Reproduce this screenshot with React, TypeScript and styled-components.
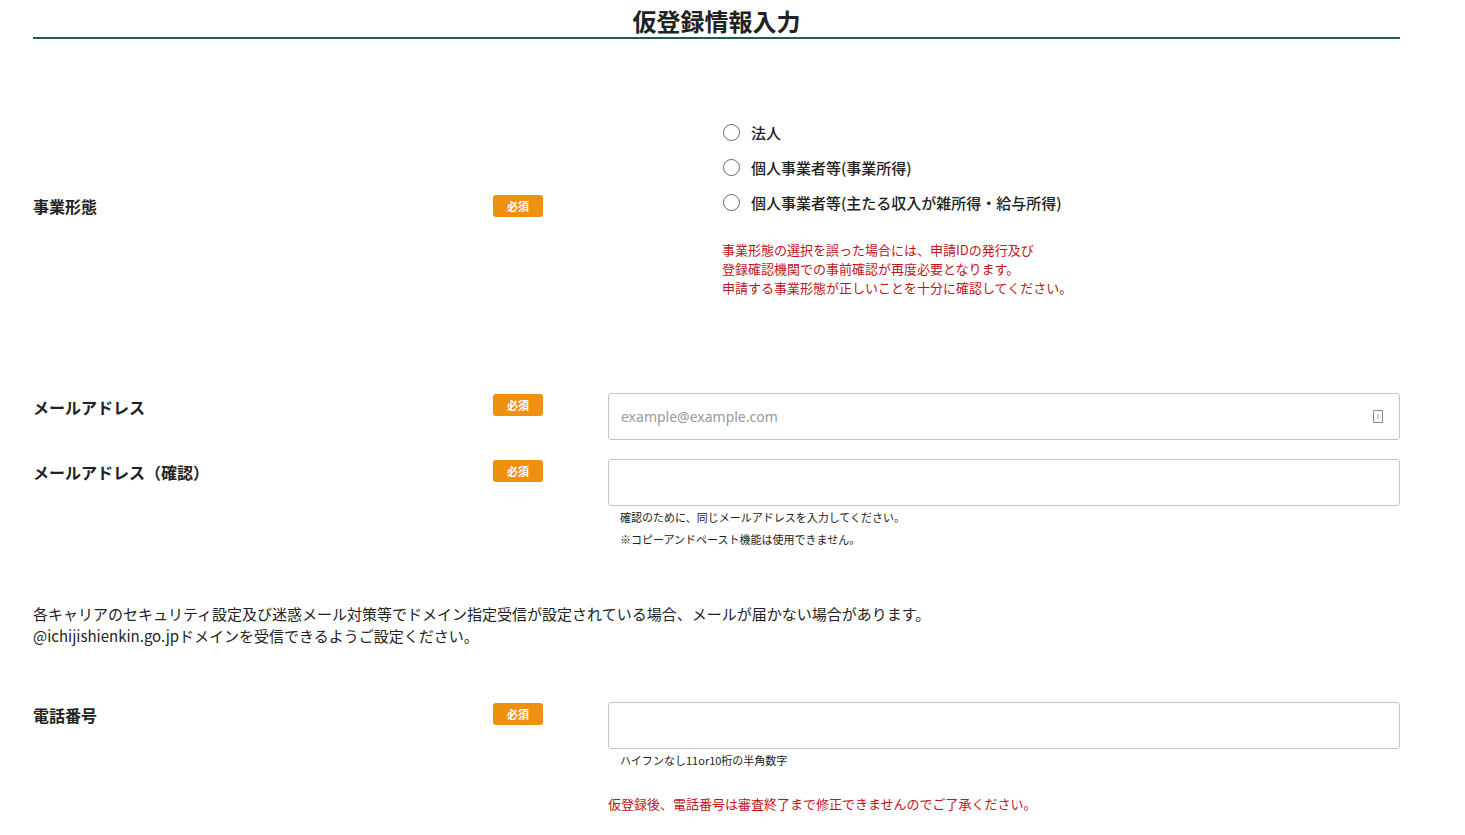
import React from 'react';
import styled, { createGlobalStyle } from 'styled-components';

const Global = createGlobalStyle`
  body { margin: 0; background: #fff; font-family: "Noto Sans CJK JP", "Noto Sans", sans-serif; color: #222; }
`;

const Page = styled.div`
  width: 1367px;
  margin-left: 33px;
`;

const Title = styled.h1`
  margin: 0;
  padding-top: 4px;
  height: 33px;
  font-size: 24px;
  font-weight: 700;
  text-align: center;
  line-height: 33px;
  border-bottom: 2px solid #1f5e4a;
`;

const Row = styled.div<{ $top: number; $align?: string; $pb?: number }>`
  display: grid;
  grid-template-columns: 460px 115px 1fr;
  align-items: ${(p) => p.$align || 'start'};
  margin-top: ${(p) => p.$top}px;
  padding-bottom: ${(p) => p.$pb ?? 0}px;
`;

const Label = styled.div<{ $pt?: number }>`
  font-size: 16px;
  font-weight: 700;
  padding-top: ${(p) => p.$pt ?? 0}px;
`;

const Badge = styled.span<{ $mt?: number }>`
  display: inline-block;
  width: 50px;
  height: 22px;
  margin-top: ${(p) => p.$mt ?? 0}px;
  background: #f0900f;
  color: #fff;
  border-radius: 3px;
  font-size: 11px;
  font-weight: 700;
  text-align: center;
  line-height: 22px;
  justify-self: start;
`;

const Radios = styled.div`
  padding-left: 114px;
`;

const RadioItem = styled.label`
  display: flex;
  align-items: center;
  gap: 11px;
  height: 35px;
  font-size: 15px;
  font-weight: 500;
`;

const Circle = styled.span`
  width: 15px;
  height: 15px;
  border: 1.5px solid #666;
  border-radius: 50%;
  margin-left: 1px;
`;

const RedNote = styled.p<{ $mt: number; $lh?: number }>`
  margin: ${(p) => p.$mt}px 0 0;
  color: #c0141a;
  font-size: 13px;
  line-height: ${(p) => p.$lh ?? 19}px;
`;

const Field = styled.div`
  height: 47px;
  border: 1px solid #c4c4c4;
  border-radius: 3px;
  box-sizing: border-box;
  display: flex;
  align-items: center;
  padding: 0 12px;
  color: #999;
  font-size: 14px;
  font-family: "Noto Sans", sans-serif;
`;

const FieldIcon = styled.span`
  margin-left: auto;
  margin-right: 4px;
  width: 8px;
  height: 11px;
  border: 1px solid #888;
  border-radius: 1px;
  display: flex;
  align-items: center;
  justify-content: center;
  font-size: 7px;
  color: #666;
`;

const Hint = styled.p`
  margin: 0;
  padding-left: 12px;
  font-size: 11px;
  line-height: 22px;
`;

const Para = styled.p`
  margin: 53px 0 0;
  font-size: 15px;
  line-height: 22px;
`;

export default function App() {
  return (
    <Page>
      <Global />
      <Title>仮登録情報入力</Title>
      <Row $top={76} $align="center" $pb={16}>
        <Label>事業形態</Label>
        <Badge>必須</Badge>
        <Radios>
          <RadioItem><Circle />法人</RadioItem>
          <RadioItem><Circle />個人事業者等(事業所得)</RadioItem>
          <RadioItem><Circle />個人事業者等(主たる収入が雑所得・給与所得)</RadioItem>
          <RedNote $mt={20}>
            事業形態の選択を誤った場合には、申請IDの発行及び<br />
            登録確認機関での事前確認が再度必要となります。<br />
            申請する事業形態が正しいことを十分に確認してください。
          </RedNote>
        </Radios>
      </Row>
      <Row $top={80}>
        <Label $pt={2}>メールアドレス</Label>
        <Badge $mt={1}>必須</Badge>
        <Field>example@example.com<FieldIcon>!</FieldIcon></Field>
      </Row>
      <Row $top={19}>
        <Label $pt={1}>メールアドレス（確認）</Label>
        <Badge $mt={1}>必須</Badge>
        <div>
          <Field />
          <Hint>確認のために、同じメールアドレスを入力してください。<br />※コピーアンドペースト機能は使用できません。</Hint>
        </div>
      </Row>
      <Para>
        各キャリアのセキュリティ設定及び迷惑メール対策等でドメイン指定受信が設定されている場合、メールが届かない場合があります。<br />
        @ichijishienkin.go.jpドメインを受信できるようご設定ください。
      </Para>
      <Row $top={55}>
        <Label $pt={1}>電話番号</Label>
        <Badge $mt={1}>必須</Badge>
        <div>
          <Field />
          <Hint>ハイフンなし11or10桁の半角数字</Hint>
          <RedNote $mt={22} $lh={22}>仮登録後、電話番号は審査終了まで修正できませんのでご了承ください。</RedNote>
        </div>
      </Row>
    </Page>
  );
}
